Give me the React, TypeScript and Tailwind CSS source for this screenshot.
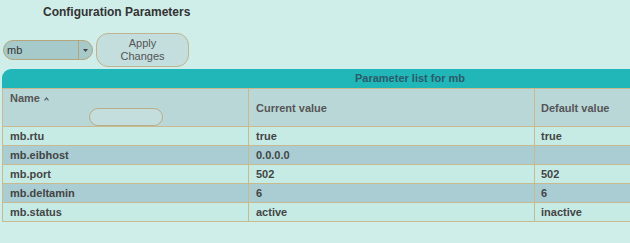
import React from "react";

const rows = [
  { name: "mb.rtu", cur: "true", def: "true" },
  { name: "mb.eibhost", cur: "0.0.0.0", def: "" },
  { name: "mb.port", cur: "502", def: "502" },
  { name: "mb.deltamin", cur: "6", def: "6" },
  { name: "mb.status", cur: "active", def: "inactive" },
];

export default function App() {
  return (
    <div
      className="min-h-[243px] w-[630px] overflow-hidden bg-[#cfeee9] text-[#333]"
      style={{ fontFamily: '"Liberation Sans", Arial, sans-serif' }}
    >
      <div className="pl-[43px] pt-[5px] text-[12px] font-bold leading-[15px] text-[#333]">
        Configuration Parameters
      </div>
      <div className="mt-[13px] flex items-center pl-[3px]">
        <div className="flex h-[20px] w-[90px] items-center rounded-full border border-[#b5a57c] bg-[#a6c9c9]">
          <span className="flex-1 pl-[3px] text-[11px] leading-none text-[#333]">mb</span>
          <div className="flex h-full w-[14px] items-center justify-center border-l border-[#b5a57c]">
            <svg width="5" height="3" viewBox="0 0 5 3">
              <path d="M0 0 L5 0 L2.5 3 Z" fill="#444" />
            </svg>
          </div>
        </div>
        <div className="ml-[3px] flex h-[34px] w-[93px] flex-col items-center justify-center rounded-[12px] border border-[#c0b48e] bg-[#c3dedd] text-[11px] leading-[13px] text-[#555]">
          <span>Apply</span>
          <span>Changes</span>
        </div>
      </div>
      <div className="ml-[2px] mt-[2px] w-[816px]">
        <div className="flex h-[19px] items-center justify-center rounded-t-[9px] bg-[#21b7b8] text-[11px] font-bold text-[#2d5a6a]">
          Parameter list for mb
        </div>
        <div className="flex h-[39px] border-y border-l border-[#c9b98e] bg-[#bad7d8] text-[11px] font-bold text-[#555]">
          <div className="flex w-[246px] flex-col border-r border-[#c9b98e] pl-[7px] pt-[3px]">
            <span className="flex items-center gap-[4px] leading-[13px]">
              Name
              <svg width="5" height="4" viewBox="0 0 5 4">
                <path d="M0.5 3.5 L2.5 1 L4.5 3.5" fill="none" stroke="#555" strokeWidth="1.2" />
              </svg>
            </span>
            <div className="ml-[79px] mt-[3px] h-[19px] w-[74px] rounded-full border border-[#b9ad8a] bg-[#c3dedd]" />
          </div>
          <div className="flex w-[286px] items-center border-r border-[#c9b98e] pl-[7px] pt-[2px]">
            Current value
          </div>
          <div className="flex flex-1 items-center border-r border-[#c9b98e] pl-[6px] pt-[2px]">
            Default value
          </div>
        </div>
        {rows.map((r, i) => (
          <div
            key={r.name}
            className={`flex h-[19px] border-b border-l border-[#c9b98e] text-[11px] font-bold text-[#444] ${
              i % 2 === 0 ? "bg-[#c6ebe5]" : "bg-[#a9cdd2]"
            }`}
          >
            <div className="flex w-[246px] items-center border-r border-[#c9b98e] pl-[7px]">{r.name}</div>
            <div className="flex w-[286px] items-center border-r border-[#c9b98e] pl-[7px]">{r.cur}</div>
            <div className="flex flex-1 items-center border-r border-[#c9b98e] pl-[6px]">{r.def}</div>
          </div>
        ))}
      </div>
    </div>
  );
}
